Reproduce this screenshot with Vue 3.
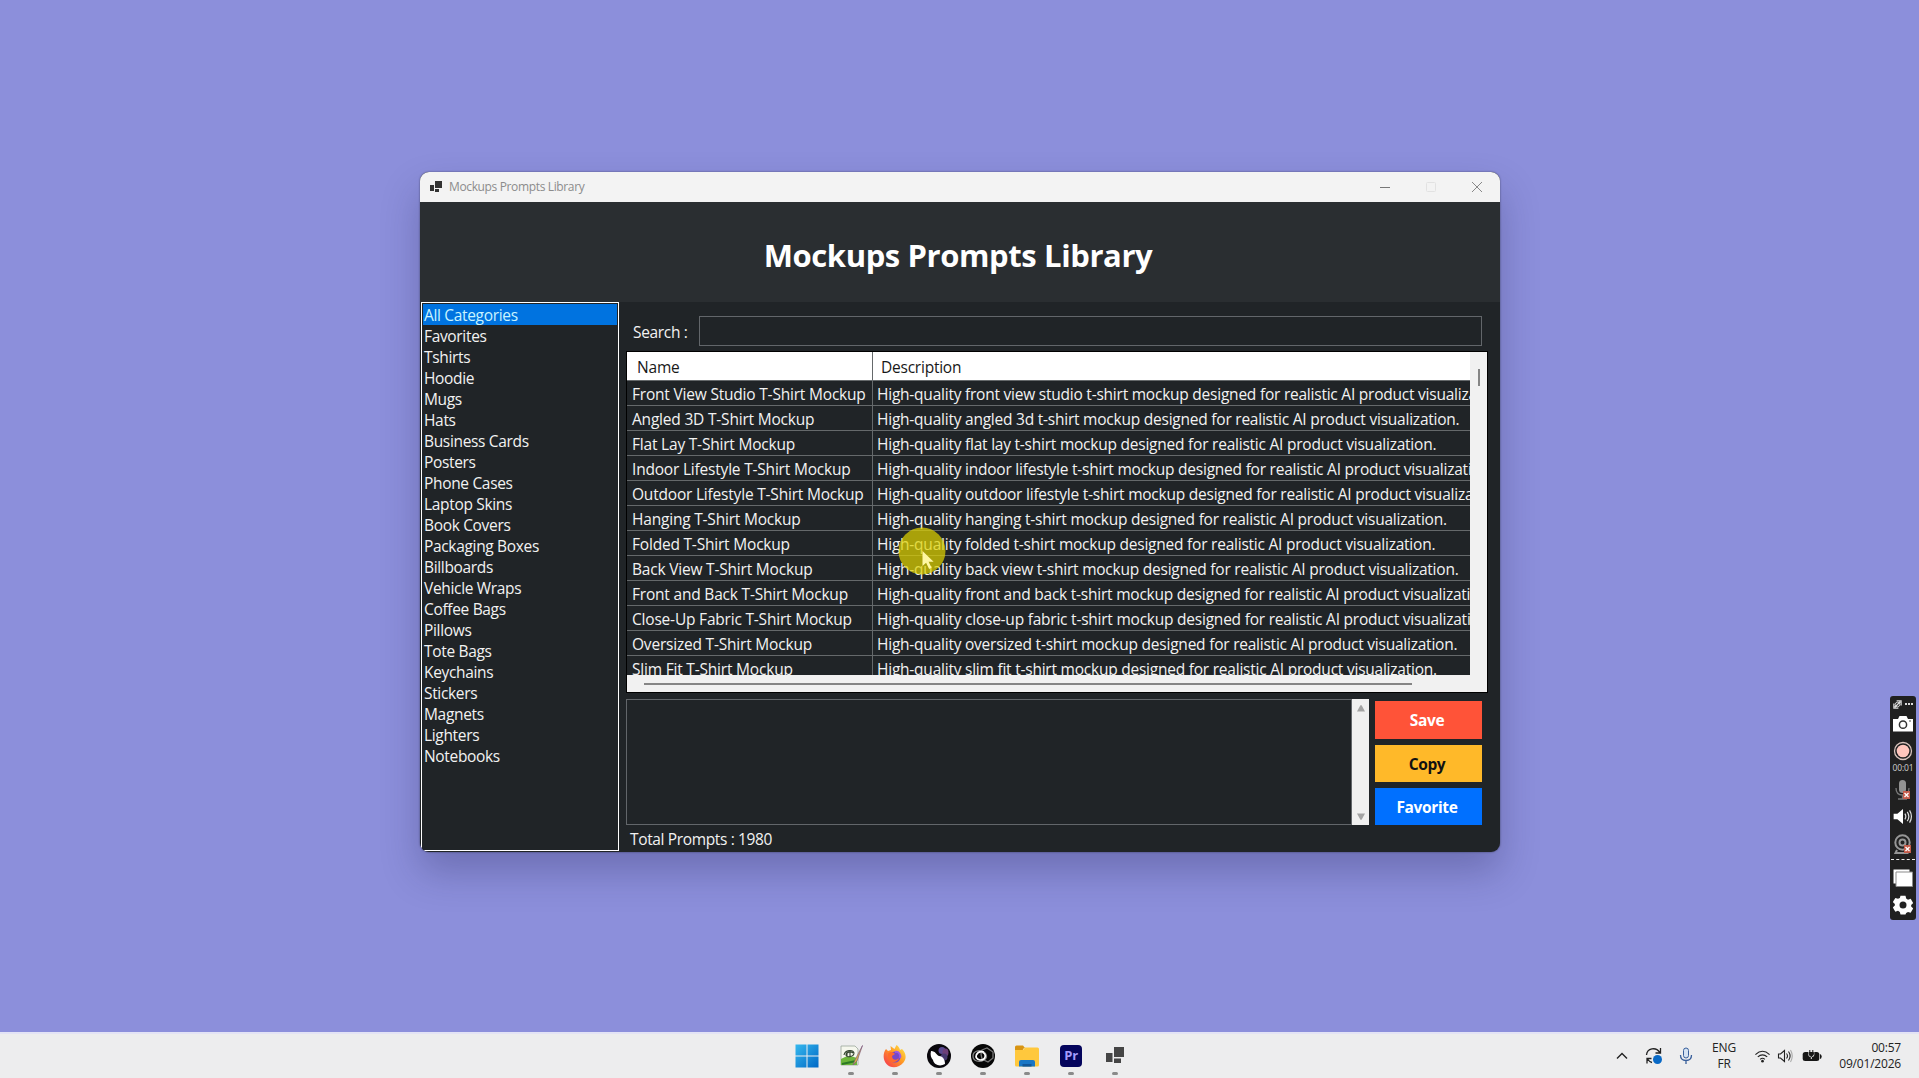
<template>
  <div class="desktop">
    <main class="workspace">
      <section class="window">
        <header class="titlebar">
          <svg class="app-icon" viewBox="0 0 12 12">
            <path d="M5 0h7v7H5zM0 4h4v6H0zM5 8h4v3H5z" fill="#333" />
          </svg>
          <span class="titlebar-text">Mockups Prompts Library</span>
          <div class="controls">
            <svg viewBox="0 0 12 12"><path d="M1 6.5h10" stroke="#777" /></svg>
            <svg viewBox="0 0 12 12"><rect x="1.5" y="1.5" width="9" height="9" rx="1" fill="none" stroke="#e2e2e2" /></svg>
            <svg viewBox="0 0 12 12"><path d="M1 1l10 10M11 1L1 11" stroke="#888" /></svg>
          </div>
        </header>

        <div class="banner"><h1>Mockups Prompts Library</h1></div>

        <div class="content">
          <ul class="categories">
            <li
              v-for="category in categories"
              :key="category"
              :class="{ selected: category === selected }"
              @click="selected = category"
            >{{ category }}</li>
          </ul>

          <div class="panel">
            <div class="search">
              <label for="search">Search :</label>
              <input id="search" v-model="search" type="text" />
            </div>

            <div class="grid">
              <div class="grid-body">
                <div class="grid-row grid-head">
                  <span>Name</span>
                  <span>Description</span>
                </div>
                <div v-for="name in mockups" :key="name" class="grid-row">
                  <span>{{ name }} T-Shirt Mockup</span>
                  <span>High-quality {{ name.toLowerCase() }} t-shirt mockup designed for realistic AI product visualization.</span>
                </div>
              </div>
              <div class="v-scroll"><i></i></div>
              <div class="h-scroll"><i></i></div>
            </div>

            <div class="editor">
              <div class="prompt-box">
                <div class="prompt-text"></div>
                <div class="prompt-scroll">
                  <svg viewBox="0 0 10 8"><path d="M1 7.5h8L5.6 1.3h-1.2z" fill="#a3a3a3" /></svg>
                  <svg viewBox="0 0 10 8"><path d="M1 .5h8L5.6 6.7h-1.2z" fill="#a3a3a3" /></svg>
                </div>
              </div>
              <div class="actions">
                <button class="save">Save</button>
                <button class="copy">Copy</button>
                <button class="favorite">Favorite</button>
              </div>
            </div>

            <p class="total">Total Prompts : 1980</p>
          </div>
        </div>
      </section>
    </main>

    <footer class="taskbar">
      <div class="apps">
        <div class="app">
          <svg viewBox="0 0 24 24">
            <defs>
              <linearGradient id="win" x1="0" y1="0" x2="1" y2="1">
                <stop offset="0" stop-color="#35b8ee" />
                <stop offset="1" stop-color="#0067c5" />
              </linearGradient>
            </defs>
            <path d="M.5.5h11v11H.5zM12.5.5h11v11h-11zM.5 12.5h11v11H.5zM12.5 12.5h11v11h-11z" fill="url(#win)" />
          </svg>
        </div>
        <div class="app open">
          <svg viewBox="0 0 24 24">
            <path d="M2 2h14l3 3v16H2z" fill="#f5f7ed" stroke="#9aa69a" stroke-width=".8" />
            <path d="M2 15q7-5 16-1v7H2z" fill="#6cb53a" />
            <path d="M5 11c1-5 9-6 10-2 0 4-8 5-8 2 0-3 5-4 7-2M8 8v5M11 7v5" fill="none" stroke="#354631" stroke-width="1.1" />
            <path d="M3 20l14-3" stroke="#2c7925" stroke-width="2" />
            <path d="M23.5 1.5L16 16l-2 5 4-4z" fill="#d9b441" stroke="#805c82" stroke-width=".7" />
          </svg>
        </div>
        <div class="app open">
          <svg viewBox="0 0 24 24">
            <defs>
              <linearGradient id="fox" x1="1" y1="0" x2="0" y2="1">
                <stop offset="0" stop-color="#fff04c" />
                <stop offset=".45" stop-color="#ff9b24" />
                <stop offset="1" stop-color="#f52b55" />
              </linearGradient>
            </defs>
            <path d="M3 5l2 2 3-1-.5-4 4 3 2-4c2 1 3 3 3.500 5l2-1c4 4 5 9 1.500 13.500C16 24 8 25 3.500 20-.5 15 0 9 3 5z" fill="url(#fox)" />
            <circle cx="12" cy="13" r="5.500" fill="#7548c7" />
            <path d="M5 10c2-3 5-2 7 0l-3 2c0 4 4 5 7 2-1 5-9 6-11 0z" fill="#ff6a2c" />
            <path d="M12 8c4-1 6 3 5 6" fill="none" stroke="#9b5ae6" stroke-width="2" />
          </svg>
        </div>
        <div class="app open">
          <svg viewBox="0 0 24 24">
            <circle cx="12" cy="12" r="12" fill="#09070c" />
            <ellipse cx="15" cy="6.500" rx="3.500" ry="3.500" fill="#5a4a91" />
            <ellipse cx="18.500" cy="8.500" rx="3" ry="4" fill="#6d3f79" />
            <ellipse cx="17" cy="13" rx="3.500" ry="3.500" fill="#473970" />
            <path d="M4 7c5 0 5 4 8 5 4 0 6 4 6 8-5 3-11 1-12-4-2-2-3-5-2-9z" fill="#fff" />
          </svg>
        </div>
        <div class="app open">
          <svg viewBox="0 0 24 24">
            <circle cx="12" cy="12" r="12" fill="#070707" />
            <g fill="none" stroke-width="1.300">
              <path d="M11 6l5-2 6 4v6l-5 4-6-3-1-5z" stroke="#777" />
              <path d="M2 12c0-5 6-6 9-5 5 2 6 7 2 9-5 3-11 1-11-4z" stroke="#888" />
              <path d="M13 8c-8-2-11 7-4 8 6 0 7-6 2-8" stroke="#fff" stroke-width="1.700" />
            </g>
          </svg>
        </div>
        <div class="app open">
          <svg viewBox="0 0 24 24">
            <path d="M0 3q0-1.500 1.500-1.500H8L10 4h-1L7 7H0z" fill="#d89412" />
            <path d="M0 6h8l2-2.500h12.500Q24 3.500 24 5v16q0 1.500-1.500 1.500h-21Q0 22.500 0 21z" fill="#ffc83d" />
            <path d="M4 22.500V18q0-2 2-2h12q2 0 2 2v4.500z" fill="#1976c5" />
            <path d="M7.500 20h9v2.500h-9z" fill="#115799" />
          </svg>
        </div>
        <div class="app open">
          <div class="premiere">Pr</div>
        </div>
        <div class="app open">
          <svg viewBox="0 0 24 24">
            <path d="M11 3h10v10H11zM3 9h6.500v9H3zM11 14.500h7V19h-7z" fill="#454545" />
          </svg>
        </div>
      </div>

      <div class="tray">
        <svg class="chevron" viewBox="0 0 12 12"><path d="M1 8.500l5-5 5 5" fill="none" stroke="#222" stroke-width="1.400" /></svg>
        <svg class="update" viewBox="0 0 18 18">
          <g fill="none" stroke="#222" stroke-width="1.300">
            <path d="M1.500 8C2 1 11-.5 14.800 5.500M15.500 1v5h-5M7 15.500Q4.500 15 2.500 12M6.500 11.500H2v5" />
          </g>
          <circle cx="12.500" cy="12.500" r="4.500" fill="#0869c6" />
        </svg>
        <svg class="mic" viewBox="0 0 14 18">
          <rect x="4.500" y="1" width="5" height="10" rx="2.500" fill="#d5e3f4" stroke="#385f9b" />
          <path d="M1.500 8q0 5.500 5.500 5.500T12.500 8M7 13.500V17" fill="none" stroke="#385f9b" stroke-width="1.300" />
        </svg>
        <div class="language"><span>ENG</span><span>FR</span></div>
        <svg class="wifi" viewBox="0 0 18 16">
          <g fill="none" stroke="#222" stroke-width="1.200">
            <path d="M1.500 6.500q7.500-7 15 0M4 9q5-4.500 10 0M6.500 11.500q2.500-2.200 5 0" />
          </g>
          <circle cx="9" cy="13.500" r="1.400" fill="#222" />
        </svg>
        <svg class="sound" viewBox="0 0 16 16">
          <g fill="none" stroke="#222" stroke-width="1.100">
            <path d="M1.500 6h2L7.500 2.500v11L3.500 10h-2zM9.500 5.500q2 2.500 0 5M11.500 3.500q3.200 4.500 0 9" />
            <path d="M13.500 2q3.500 6 0 12" stroke="#aaa" />
          </g>
        </svg>
        <svg class="battery" viewBox="0 0 20 14">
          <rect x=".7" y="3" width="16.600" height="9" rx="2.500" fill="#161616" />
          <path d="M18 5q1.700.5 1.700 2.500T18 10z" fill="#161616" />
          <path d="M6.300 2.500h6v3q0 2.500-3 2.500t-3-2.500z" fill="#eee" />
          <path d="M7.200 3.500h4.200V5q0 2-2.100 2T7.200 5zM7.800 1v3M10.800 1v3M9.300 6v2" fill="#161616" stroke="#161616" />
          <path d="M9.300 8v2" stroke="#eee" />
        </svg>
        <div class="clock"><span>00:57</span><span>09/01/2026</span></div>
      </div>
    </footer>

    <aside class="recorder">
      <div class="recorder-top">
        <svg viewBox="0 0 10 10">
          <path d="M4 1h5v5M6 9H1V4M2 8l6-6" fill="none" stroke="#ddd" stroke-width="1.400" />
          <circle cx="5" cy="5" r="2.500" fill="none" stroke="#ddd" />
        </svg>
        <i></i><i></i><i></i>
      </div>
      <svg class="camera" viewBox="0 0 20 16">
        <path d="M0 3h5l1.500-3h7L15 3h5v12.500H0z" fill="#fff" />
        <circle cx="10" cy="8.700" r="3.600" fill="#fff" stroke="#333" stroke-width="1.500" />
        <circle cx="17" cy="5" r=".8" fill="#333" />
      </svg>
      <svg class="record" viewBox="0 0 20 20">
        <circle cx="10" cy="10" r="8.500" fill="none" stroke="#d8c3bd" stroke-width="1.300" />
        <circle cx="10" cy="10" r="6.300" fill="#ffc5bc" />
      </svg>
      <span class="elapsed">00:01</span>
      <svg class="rec-mic" viewBox="0 0 20 20">
        <rect x="6" y="0" width="7" height="13" rx="3.500" fill="#919191" />
        <path d="M3 8q0 7 6.500 7T16 8M9.500 15v4M5 19h9" fill="none" stroke="#777" stroke-width="1.300" />
        <path d="M10 11h7v8h-7z" fill="#c45b4a" />
        <path d="M11.500 13l4 4m0-4l-4 4" stroke="#fff" stroke-width="1.300" />
      </svg>
      <svg class="rec-sound" viewBox="0 0 20 16">
        <path d="M0 5h4l6-5v16l-6-5H0z" fill="#fff" />
        <path d="M12 5q2 3 0 6M14.500 3q3.500 5 0 10M17 1.500q4 6.500 0 13" fill="none" stroke="#ddd" stroke-width="1.300" />
      </svg>
      <svg class="webcam" viewBox="0 0 20 20">
        <circle cx="9.500" cy="8.500" r="7.200" fill="none" stroke="#969696" stroke-width="2" />
        <circle cx="9.500" cy="8.500" r="3" fill="none" stroke="#969696" stroke-width="2" />
        <path d="M4 16l-1.500 3h13" fill="none" stroke="#969696" stroke-width="2" />
        <path d="M11 11h7v8h-7z" fill="#c45b4a" />
        <path d="M12.500 13l4 4m0-4l-4 4" stroke="#fff" stroke-width="1.300" />
      </svg>
      <div class="divider"></div>
      <svg class="windows" viewBox="0 0 20 18">
        <path d="M.5.500h16v14H.5z" fill="#fff" />
        <path d="M3 3h16.500v14.500H3z" fill="#fff" stroke="#8b8b8b" />
      </svg>
      <svg class="gear" viewBox="0 0 24 24">
        <path d="M9 1h6l.8 3.300 2.200 1.300 3.200-1 3 5.100-2.400 2.300v1.900l2.400 2.300-3 5.100-3.200-1-2.200 1.300L15 23.500H9l-.8-3.200L6 19l-3.200 1-3-5.100 2.400-2.300v-1.900L-.2 8.500l3-5 3.200 1 2.200-1z" fill="#fff" />
        <circle cx="12" cy="12" r="4.200" fill="#222" />
      </svg>
    </aside>

    <div class="pointer">
      <svg viewBox="0 0 48 48">
        <circle cx="24" cy="24" r="23.500" fill="#ded100" fill-opacity=".72" />
        <path d="M24.500 24v15l3.600-3.200 3 6.200 2.500-1.200-3-6h5z" fill="#fff7a3" />
      </svg>
    </div>
  </div>
</template>

<script setup>
import { ref } from 'vue'

const search = ref('')
const selected = ref('All Categories')

const categories = [
  'All Categories', 'Favorites', 'Tshirts', 'Hoodie', 'Mugs', 'Hats',
  'Business Cards', 'Posters', 'Phone Cases', 'Laptop Skins', 'Book Covers',
  'Packaging Boxes', 'Billboards', 'Vehicle Wraps', 'Coffee Bags', 'Pillows',
  'Tote Bags', 'Keychains', 'Stickers', 'Magnets', 'Lighters', 'Notebooks'
]

const mockups = [
  'Front View Studio', 'Angled 3D', 'Flat Lay', 'Indoor Lifestyle',
  'Outdoor Lifestyle', 'Hanging', 'Folded', 'Back View', 'Front and Back',
  'Close-Up Fabric', 'Oversized', 'Slim Fit'
]
</script>

<style>
body {
  margin: 0;
  overflow: hidden;
}
</style>

<style scoped>
* {
  box-sizing: border-box;
}

.desktop {
  position: relative;
  display: flex;
  flex-direction: column;
  height: 1078px;
  background: #8c8fdb;
  font-family: "Open Sans", "Noto Sans", sans-serif;
  font-size: 15.5px;
  letter-spacing: -0.2px;
  color: #f2f2f2;
}

svg {
  display: block;
  flex: none;
}

.workspace {
  flex: 1;
  padding: 172px 0 0 420px;
}

.window {
  width: 1080px;
  height: 680px;
  overflow: hidden;
  background: #202427;
  border-radius: 9px;
  box-shadow: 0 0 2px rgba(0, 0, 0, .5), 0 20px 38px rgba(30, 30, 80, .28);
}

.titlebar {
  display: flex;
  align-items: center;
  height: 30px;
  padding: 0 17px 1px 10px;
  background: #f3f3f3;
  color: #8c8c8c;
  font-size: 12px;
  letter-spacing: -0.36px;
}

.app-icon {
  width: 12px;
  height: 12px;
  margin-right: 7px;
}

.controls {
  display: flex;
  gap: 34px;
  margin-left: auto;
}

.controls svg {
  width: 12px;
  height: 12px;
}

.banner {
  display: flex;
  align-items: center;
  justify-content: center;
  height: 100px;
  padding: 5px 4px 0 0;
  background: #2a2e31;
}

.banner h1 {
  margin: 0;
  color: #fff;
  font-size: 31px;
  font-weight: 700;
  letter-spacing: -0.4px;
}

.content {
  display: flex;
  height: 550px;
}

.categories {
  width: 198px;
  height: 549px;
  margin: 0 7px 0 1px;
  padding: 1px;
  border: 1px solid #fff;
  list-style: none;
  letter-spacing: -0.33px;
}

.categories li {
  height: 21px;
  padding-left: 1px;
  line-height: 22px;
}

.categories .selected {
  background: #0073e0;
  color: #c9f3ff;
}

.panel {
  width: 861px;
}

.search {
  display: flex;
  align-items: center;
  height: 49px;
  padding: 10px 0 0 7px;
  letter-spacing: -0.33px;
}

.search label {
  width: 66px;
}

.search input {
  width: 783px;
  height: 30px;
  margin-bottom: 1px;
  border: 1px solid #62666a;
  background: #202427;
  color: #fff;
  outline: 0;
}

.grid {
  display: grid;
  grid-template: 323px 17px / 843px 17px;
  width: 862px;
  height: 342px;
  border: 1px solid #000;
  background: #f1f1f1;
}

.grid-body {
  overflow: hidden;
  background: #202427;
}

.grid-row {
  display: grid;
  grid-template-columns: 246px 597px;
  height: 25px;
}

.grid-row span {
  overflow: hidden;
  padding-left: 5px;
  border-right: 1px solid #65696b;
  border-bottom: 1px solid #65696b;
  line-height: 27px;
  white-space: nowrap;
}

.grid-row span:last-child {
  padding-left: 4px;
  border-right: 0;
  letter-spacing: -0.23px;
}

.grid-head {
  height: 29px;
  background: #fff;
  color: #181818;
}

.grid-head span {
  padding-left: 10px;
  line-height: 31px;
}

.grid-head span:last-child {
  padding-left: 8px;
}

.v-scroll {
  padding: 17px 0 0 8px;
}

.v-scroll i {
  display: block;
  width: 2px;
  height: 17px;
  background: #858585;
}

.h-scroll {
  padding: 8px 0 0 17px;
}

.h-scroll i {
  display: block;
  width: 768px;
  height: 2px;
  background: #858585;
}

.editor {
  display: flex;
  gap: 6px;
  height: 126px;
  margin-top: 6px;
}

.prompt-box {
  display: flex;
  width: 743px;
}

.prompt-text {
  flex: 1;
  border: 1px solid #62666a;
}

.prompt-scroll {
  display: flex;
  flex-direction: column;
  align-items: center;
  justify-content: space-between;
  width: 17px;
  padding: 5px 0 4px;
  background: #f0f0f0;
}

.prompt-scroll svg {
  width: 10px;
  height: 8px;
}

.actions {
  display: grid;
  grid-template-rows: 38px 37px 37px;
  gap: 6px;
  width: 107px;
  padding-top: 2px;
}

.actions button {
  padding: 0 3px 0 0;
  border: 0;
  color: #fff;
  font: 700 15.5px "Open Sans", sans-serif;
  letter-spacing: -0.35px;
}

.actions .save {
  background: #ff5338;
}

.actions .copy {
  background: #ffb929;
  color: #111;
}

.actions .favorite {
  background: #0070ff;
}

.total {
  margin: 2px 0 0 4px;
  line-height: 24px;
  letter-spacing: -0.36px;
}

.taskbar {
  position: relative;
  height: 46px;
  border-top: 2px solid #e3e3f5;
  background: #ededee;
  color: #222;
}

.apps {
  display: flex;
  gap: 20.1px;
  height: 44px;
  padding: 10px 0 0 794.6px;
}

.app {
  display: flex;
  flex-direction: column;
  gap: 4px;
  width: 24px;
}

.app svg {
  width: 24px;
  height: 24px;
}

.app.open::after {
  width: 6px;
  height: 3px;
  margin-left: 9px;
  border-radius: 2px;
  background: #8a8a8a;
  content: "";
}

.premiere {
  width: 22px;
  height: 22px;
  margin: 1px;
  border-radius: 4px;
  background: #05055c;
  color: #a49cff;
  font-size: 13px;
  font-weight: 700;
  line-height: 21px;
  text-align: center;
}

.tray {
  position: absolute;
  top: 0;
  right: 18px;
  display: flex;
  align-items: center;
  height: 44px;
  font-size: 12px;
}

.chevron {
  width: 12px;
  height: 12px;
  margin-right: 17px;
}

.update {
  width: 18px;
  height: 18px;
  margin-right: 16px;
}

.mic {
  width: 14px;
  height: 18px;
  margin-right: 18px;
}

.language,
.clock {
  display: flex;
  flex-direction: column;
  line-height: 16px;
}

.language {
  align-items: center;
  width: 26px;
  margin-right: 17px;
}

.wifi {
  width: 17px;
  height: 16px;
  margin-right: 6px;
}

.sound {
  width: 16px;
  height: 16px;
  margin-right: 9px;
}

.battery {
  width: 20px;
  height: 14px;
}

.clock {
  align-items: flex-end;
  width: 79px;
}

.recorder {
  position: absolute;
  top: 696px;
  left: 1890px;
  display: flex;
  flex-direction: column;
  align-items: center;
  width: 26px;
  height: 224px;
  padding-top: 3px;
  border-radius: 3px;
  background: #202020;
}

.recorder-top {
  display: flex;
  align-items: center;
  gap: 1px;
  height: 10px;
  margin-bottom: 7px;
}

.recorder-top svg {
  width: 9px;
  height: 9px;
  margin-right: 2px;
}

.recorder-top i {
  width: 2px;
  height: 2px;
  background: #ddd;
}

.camera {
  width: 20px;
  height: 16px;
  margin-bottom: 9px;
}

.record {
  width: 20px;
  height: 20px;
}

.elapsed {
  margin: 2px 0 7px;
  color: #d0d0d0;
  font-size: 8.5px;
  line-height: 10px;
  letter-spacing: -0.1px;
}

.rec-mic {
  width: 20px;
  height: 20px;
  margin-bottom: 9px;
}

.rec-sound {
  width: 20px;
  height: 15px;
  margin-bottom: 10px;
}

.webcam {
  width: 20px;
  height: 20px;
}

.divider {
  width: 24px;
  margin: 5px 0 9px;
  border-top: 1px dashed #eee;
}

.windows {
  width: 20px;
  height: 18px;
  margin-bottom: 8px;
}

.gear {
  width: 20px;
  height: 20px;
}

.pointer {
  position: absolute;
  top: 527px;
  left: 897.5px;
  width: 48px;
  height: 48px;
}
</style>
